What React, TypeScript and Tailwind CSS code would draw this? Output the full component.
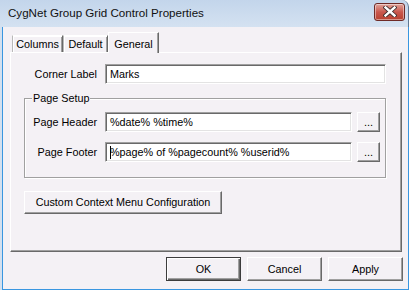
import React from "react"

const raised =
  "border border-t-white border-l-white border-r-[#696969] border-b-[#696969] shadow-[inset_-1px_-1px_0_#a0a0a0]"
const sunken =
  "border border-t-[#a0a0a0] border-l-[#a0a0a0] border-r-white border-b-white shadow-[inset_1px_1px_0_#696969,inset_-1px_-1px_0_#e3e3e3] bg-white"

export default function App() {
  return (
    <div
      className="w-[411px] h-[292px] bg-white text-black overflow-hidden"
      style={{ fontFamily: '"Liberation Sans", Arial, sans-serif' }}
    >
      <div className="w-[409px] h-[290px] flex flex-col">
        <TitleBar />
        <div className="flex flex-1">
          <div className="w-[2px] bg-[#d3e0ef]" />
          <div className="flex-1 flex flex-col bg-[#f4f1f5] border-l border-r border-b border-[#3996e0]">
            <Tabs />
            <Panel />
            <div className="flex justify-end gap-[6px] pr-[5px] mt-[5px]">
              <PushButton label="OK" isDefault />
              <PushButton label="Cancel" />
              <PushButton label="Apply" />
            </div>
          </div>
        </div>
      </div>
    </div>
  )
}

function TitleBar() {
  return (
    <div className="h-[27px] flex items-center justify-between pl-[8px] pr-[3px] rounded-tr-[7px] border-r border-[#5f7894] bg-gradient-to-b from-[#c3d5eb] to-[#d4e2f1]">
      <span className="text-[11.6px] text-[#111] mt-[-1px]">
        CygNet Group Grid Control Properties
      </span>
      <div className="w-[31px] h-[18px] mt-[-4px] rounded-[3px] border border-[#6e2a26] shadow-[inset_0_0_0_1px_rgba(255,255,255,0.45)] bg-gradient-to-b from-[#dfa39b] via-[#c9574d] to-[#b8402f] flex items-center justify-center">
        <svg width="14" height="11" viewBox="0 0 14 11">
          <path
            d="M2.5 1.5 L11.5 9.5 M11.5 1.5 L2.5 9.5"
            stroke="#3a2a2a"
            strokeWidth="4.2"
            strokeLinecap="square"
          />
          <path
            d="M2.5 1.5 L11.5 9.5 M11.5 1.5 L2.5 9.5"
            stroke="#fff"
            strokeWidth="2.4"
            strokeLinecap="square"
          />
        </svg>
      </div>
    </div>
  )
}

function Tabs() {
  const tabs = [
    { name: "Columns", w: "w-[51px]" },
    { name: "Default", w: "w-[45px]" },
  ]
  return (
    <div className="flex items-end h-[20px] mt-[5px] ml-[9px] text-[10.8px]">
      {tabs.map((t) => (
        <div
          key={t.name}
          className={`${t.w} h-[17px] flex items-center justify-center border border-b-0 border-t-white border-l-[#b9b9b9] border-r-[#696969] shadow-[inset_1px_1px_0_#fff,inset_-1px_0_0_#a0a0a0]`}
        >
          {t.name}
        </div>
      ))}
      <div className="w-[51px] h-[21px] -mb-px relative z-10 bg-[#f4f1f5] flex items-start pt-[3px] justify-center border border-b-0 border-t-white border-l-white border-r-[#696969] shadow-[inset_-1px_0_0_#a0a0a0]">
        General
      </div>
    </div>
  )
}

function Panel() {
  return (
    <div
      className={`w-[392px] h-[200px] ml-[7px] flex flex-col text-[10.8px] border border-t-white border-l-white border-r-[#696969] border-b-[#696969] shadow-[inset_-1px_-1px_0_#a0a0a0]`}
    >
      <div className="flex items-center mt-[11px]">
        <span className="w-[86px] text-right">Corner Label</span>
        <TextBox value="Marks" className="ml-[8px] w-[281px]" />
      </div>

      <div className="ml-[13px] mt-[14px] w-[362px] border border-[#a0a0a0] shadow-[inset_1px_1px_0_#fff,1px_1px_0_#fff] flex flex-col pb-[15px]">
        <span className="self-start ml-[7px] -mt-[8px] px-px h-[14px] leading-[14px] bg-[#f4f1f5]">
          Page Setup
        </span>
        <FieldRow
          label="Page Header"
          value="%date% %time%"
          className="mt-[7px]"
        />
        <FieldRow
          label="Page Footer"
          value="%page% of %pagecount% %userid%"
          className="mt-[10px]"
          caret
        />
      </div>

      <div className="ml-[13px] mt-[13px]">
        <button
          className={`w-[198px] h-[23px] bg-[#f4f1f5] text-[10.8px] ${raised}`}
        >
          Custom Context Menu Configuration
        </button>
      </div>
    </div>
  )
}

function FieldRow({
  label,
  value,
  className = "",
  caret = false,
}: {
  label: string
  value: string
  className?: string
  caret?: boolean
}) {
  return (
    <div className={`flex items-center ${className}`}>
      <span className="w-[72px] text-right">{label}</span>
      <TextBox value={value} className="ml-[8px] w-[247px]" caret={caret} />
      <button
        className={`ml-[5px] w-[23px] h-[20px] bg-[#f4f1f5] flex items-end justify-center pb-[3px] text-[11px] leading-none ${raised}`}
      >
        ...
      </button>
    </div>
  )
}

function TextBox({
  value,
  className = "",
  caret = false,
}: {
  value: string
  className?: string
  caret?: boolean
}) {
  return (
    <div
      className={`h-[20px] flex items-center pl-[4px] text-[10.8px] ${sunken} ${className}`}
    >
      {caret && <span className="w-px h-[13px] bg-black -mr-px" />}
      <span>{value}</span>
    </div>
  )
}

function PushButton({
  label,
  isDefault = false,
}: {
  label: string
  isDefault?: boolean
}) {
  return (
    <button
      className={`w-[75px] h-[24px] bg-[#f4f1f5] text-[10.8px] ${
        isDefault
          ? "border border-[#3c3c3c] shadow-[inset_1px_1px_0_#fff,inset_-1px_-1px_0_#696969,inset_-2px_-2px_0_#a0a0a0]"
          : raised
      }`}
    >
      {label}
    </button>
  )
}
